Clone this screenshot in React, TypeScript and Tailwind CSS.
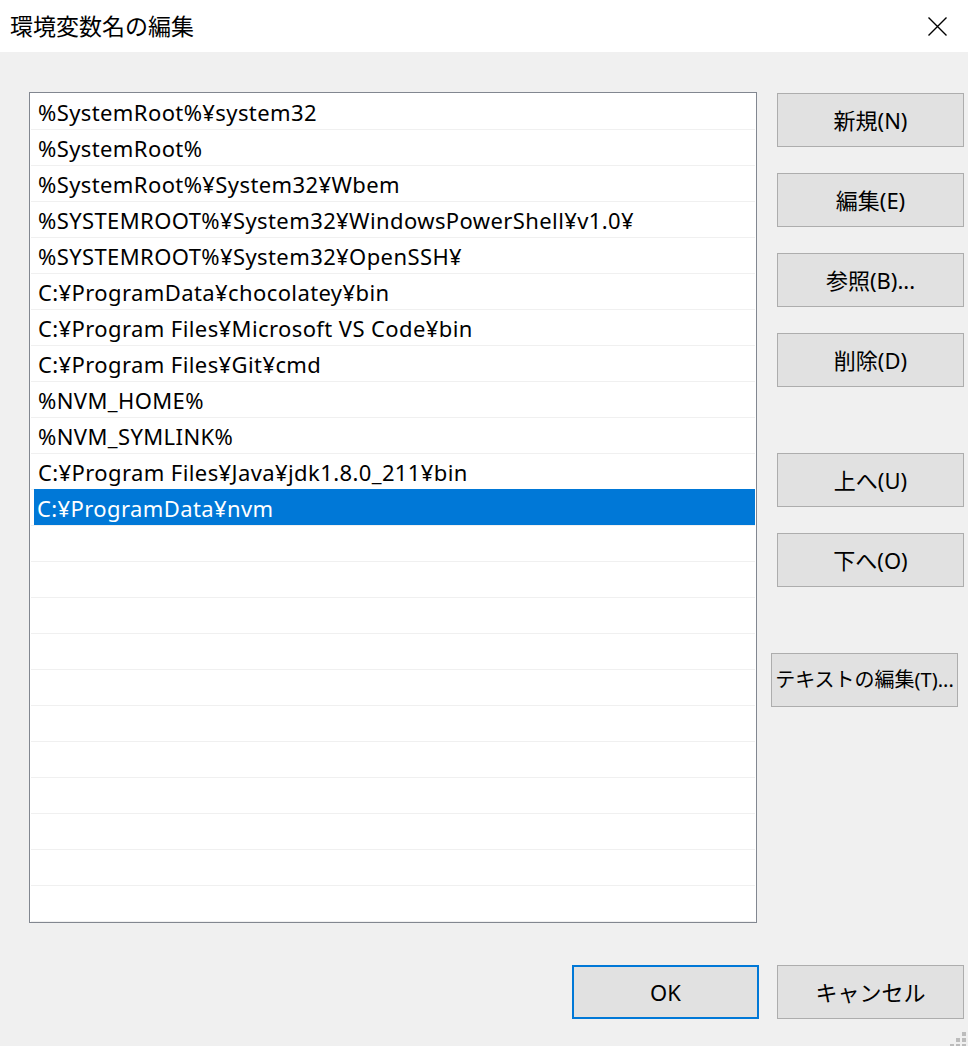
import React, { useState } from 'react'

const paths = [
  '%SystemRoot%¥system32',
  '%SystemRoot%',
  '%SystemRoot%¥System32¥Wbem',
  '%SYSTEMROOT%¥System32¥WindowsPowerShell¥v1.0¥',
  '%SYSTEMROOT%¥System32¥OpenSSH¥',
  'C:¥ProgramData¥chocolatey¥bin',
  'C:¥Program Files¥Microsoft VS Code¥bin',
  'C:¥Program Files¥Git¥cmd',
  '%NVM_HOME%',
  '%NVM_SYMLINK%',
  'C:¥Program Files¥Java¥jdk1.8.0_211¥bin',
  'C:¥ProgramData¥nvm',
]

const TOTAL_ROWS = 23

const font = "font-['Noto_Sans','Noto_Sans_CJK_JP',sans-serif]"

const DialogButton = ({ label, className = '' }: { label: string; className?: string }) => (
  <button
    className={`w-[187px] h-[54px] bg-[#e1e1e1] border border-[#adadad] text-[22px] text-black flex items-center justify-center whitespace-nowrap ${className}`}
  >
    {label}
  </button>
)

const SizeGrip = () => (
  <svg width="16" height="14" viewBox="0 0 16 14" className="absolute right-[2px] bottom-0">
    <rect x="12" y="0" width="4" height="4" fill="#bcbcbc" />
    <rect x="6" y="6" width="4" height="4" fill="#bcbcbc" />
    <rect x="12" y="6" width="4" height="4" fill="#bcbcbc" />
    <rect x="0" y="12" width="4" height="4" fill="#bcbcbc" />
    <rect x="6" y="12" width="4" height="4" fill="#bcbcbc" />
    <rect x="12" y="12" width="4" height="4" fill="#bcbcbc" />
  </svg>
)

const App = () => {
  const [selected, setSelected] = useState(11)

  return (
    <div className={`w-[968px] h-[1046px] bg-[#f0f0f0] relative overflow-hidden ${font}`}>
      {/* title bar */}
      <div className="h-[52px] bg-white flex items-center justify-between pl-[10px] pr-[21px]">
        <span className="text-[23px] text-black leading-none">環境変数名の編集</span>
        <svg width="19" height="19" viewBox="0 0 19 19">
          <path d="M0.5 0.5 L18.5 18.5 M18.5 0.5 L0.5 18.5" stroke="#000" strokeWidth="1.4" />
        </svg>
      </div>

      <div className="flex pl-[29px] pt-[40px]">
        {/* path list */}
        <div className="w-[728px] h-[831px] bg-white border border-[#828790] pt-[1px] overflow-hidden">
          {Array.from({ length: TOTAL_ROWS }).map((_, i) => {
            const text = paths[i]
            const isSelected = i === selected
            return (
              <div
                key={i}
                onClick={() => text && setSelected(i)}
                className="mx-[1px] h-[36px] border-b border-[#f0f0f0] flex"
              >
                {isSelected ? (
                  <div className="ml-[3px] flex-1 bg-[#0078d7] text-white text-[22px] tracking-[0.4px] flex items-center pl-[3px] pt-[3px] mt-[-1px] h-[36px] whitespace-nowrap">
                    {text}
                  </div>
                ) : (
                  <div className="flex-1 text-black text-[22px] tracking-[0.4px] flex items-center pl-[7px] pt-[2px] whitespace-nowrap">
                    {text}
                  </div>
                )}
              </div>
            )
          })}
        </div>

        {/* side buttons */}
        <div className="ml-[20px] flex flex-col pt-[1px]">
          <DialogButton label="新規(N)" />
          <DialogButton label="編集(E)" className="mt-[26px]" />
          <DialogButton label="参照(B)..." className="mt-[26px]" />
          <DialogButton label="削除(D)" className="mt-[26px]" />
          <DialogButton label="上へ(U)" className="mt-[66px]" />
          <DialogButton label="下へ(O)" className="mt-[26px]" />
          <DialogButton label="テキストの編集(T)..." className="mt-[66px] ml-[-6px] h-[53px] !text-[20px]" />
        </div>
      </div>

      {/* footer */}
      <div className="flex justify-end gap-[18px] pr-[4px] mt-[42px]">
        <button className="w-[187px] h-[54px] bg-[#e1e1e1] border-2 border-[#0078d7] text-[22px] text-black flex items-center justify-center">
          OK
        </button>
        <DialogButton label="キャンセル" />
      </div>

      <SizeGrip />
    </div>
  )
}

export default App
